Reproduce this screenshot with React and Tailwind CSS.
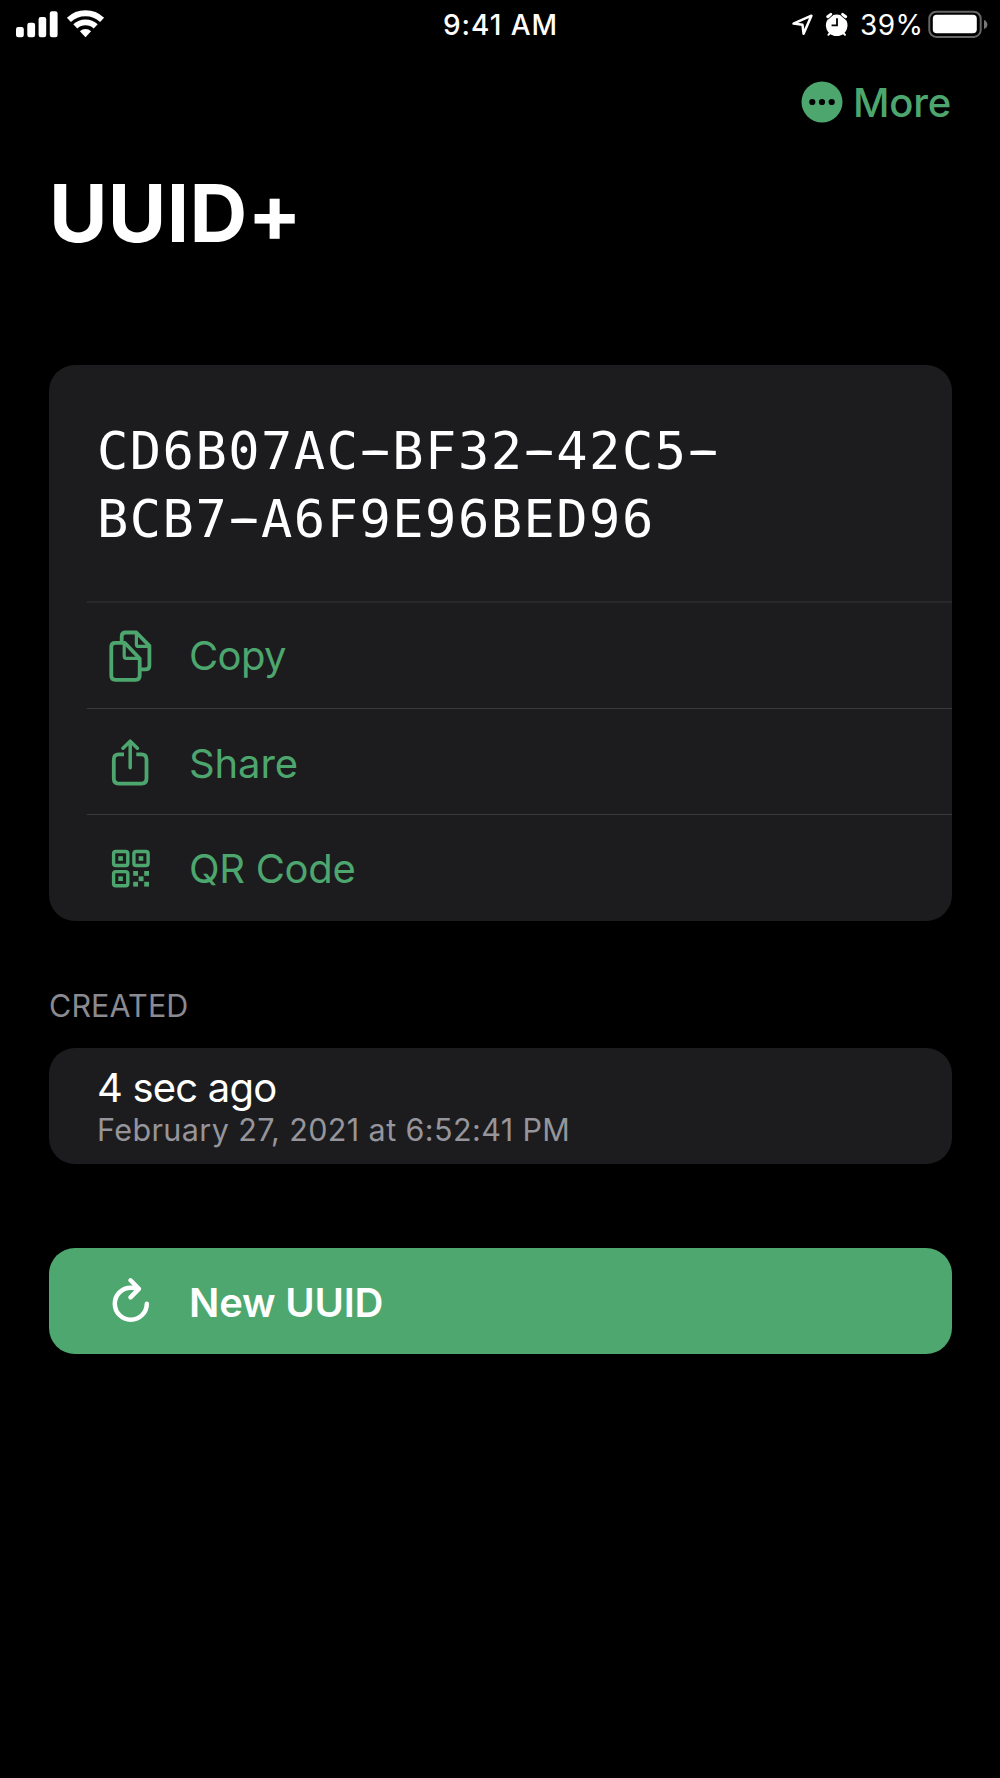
import React from "react";

function StatusBar() {
  return (
    <div className="flex h-[50px] w-full shrink-0 justify-between text-[28px] leading-[51px] text-white">
      <div className="flex w-[400px]">
        <svg width="110" height="50" viewBox="0 0 110 50" fill="#fff">
          <rect x="16" y="27" width="7.8" height="10.3" rx="2.2" />
          <rect x="27.3" y="22.7" width="7.8" height="14.6" rx="2.2" />
          <rect x="38.6" y="17" width="7.6" height="20.3" rx="2.2" />
          <rect x="49.8" y="11.2" width="7.8" height="26.1" rx="2.2" />
          <path d="M85.5 37.3 L79.9 31.3 A8.2 8.2 0 0 1 91.1 31.3 Z" />
          <path d="M75.3 26.4 A14.7 14.7 0 0 1 95.7 26.4" fill="none" stroke="#fff" strokeWidth="5.8" />
          <path d="M68.9 19.9 A24 24 0 0 1 102.1 19.9" fill="none" stroke="#fff" strokeWidth="5.8" />
        </svg>
      </div>
      <div className="w-[200px] pl-[1px] text-center font-medium tracking-[0.95px]">9:41 AM</div>
      <div className="flex w-[400px] justify-end">
        <svg width="70" height="50" viewBox="785 0 70 50">
          <path d="M793.5 23.6 L811.4 15.7 L803.6 33.8 L802.5 24.8 Z" fill="none" stroke="#fff" strokeWidth="2.5" strokeLinejoin="round" />
          <circle cx="836.7" cy="25.3" r="10.8" fill="#fff" />
          <g stroke="#fff" strokeWidth="3" strokeLinecap="round">
            <path d="M827.7 16.7 L830.8 14.4" />
            <path d="M845.7 16.7 L842.6 14.4" />
            <path d="M830 33 L828.4 34.8 M843.4 33 L845 34.8" strokeWidth="2" />
          </g>
          <path d="M827.6 19.6 L833 14.9 M845.8 19.6 L840.4 14.9" stroke="#000" strokeWidth="0.9" />
          <path d="M837 18.3 V25.4 H831.6" fill="none" stroke="#000" strokeWidth="1.8" />
        </svg>
        <span className="w-[72px] pl-[5px] whitespace-nowrap tracking-[0.4px]">39%</span>
        <svg width="73" height="50" viewBox="927 0 73 50">
          <rect x="929.3" y="11.7" width="51.4" height="25.2" rx="7" fill="none" stroke="#666" strokeWidth="2" />
          <rect x="932.8" y="14.8" width="44" height="18.4" rx="4" fill="#fff" />
          <path d="M984 20 Q987.4 21.5 987.4 24.5 Q987.4 27.5 984 29 Z" fill="#777" />
        </svg>
      </div>
    </div>
  );
}

function CopyIcon() {
  return (
    <svg width="48" height="56" viewBox="0 0 48 56" fill="none" stroke="currentColor" strokeWidth="3.8" strokeLinejoin="round">
      <path d="M18.7 14.8 H9.3 Q5.3 14.8 5.3 18.8 V47.8 Q5.3 51.8 9.3 51.8 H29.7 Q33.7 51.8 33.7 47.8 V30.5 Z" />
      <path d="M18.2 15 V28.3 Q18.2 30.3 20.2 30.3 H33.5" strokeWidth="3.2" />
      <path d="M15.7 14 V8.5 Q15.7 4.5 19.7 4.5 H30.4 L43.4 17.8 V37.4 Q43.4 41.4 39.4 41.4 H34.5" />
      <path d="M30.4 5 V16.4 Q30.4 18.4 32.4 18.4 H43" strokeWidth="3.2" />
    </svg>
  );
}

function ShareIcon() {
  return (
    <svg width="48" height="56" viewBox="0 0 48 56" fill="none" stroke="currentColor" strokeWidth="3.8">
      <path d="M18 20.4 H12.8 Q7.8 20.4 7.8 25.4 V44.6 Q7.8 49.6 12.8 49.6 H35.5 Q40.5 49.6 40.5 44.6 V25.4 Q40.5 20.4 35.5 20.4 H30.3" />
      <path d="M24.2 7.5 V33.8 M17 14.2 L24.2 7.2 L31.4 14.2" strokeLinecap="round" strokeLinejoin="round" strokeWidth="3.5" />
    </svg>
  );
}

function QrIcon() {
  return (
    <svg width="48" height="56" viewBox="0 0 48 56" fill="currentColor">
      <g fill="none" stroke="currentColor" strokeWidth="3.4">
        <rect x="7.6" y="11.5" width="14.2" height="14" rx="2.2" />
        <rect x="27.9" y="11.5" width="14.2" height="14" rx="2.2" />
        <rect x="7.6" y="31.6" width="14.2" height="14.2" rx="2.2" />
      </g>
      <rect x="12.3" y="16.2" width="4.6" height="4.6" />
      <rect x="32.7" y="16.2" width="4.6" height="4.6" />
      <rect x="12.3" y="36.4" width="4.6" height="4.6" />
      <rect x="27.2" y="31" width="4.8" height="4.8" />
      <rect x="38.2" y="31" width="4.8" height="4.8" />
      <rect x="32.7" y="36.4" width="4.8" height="4.8" />
      <rect x="27.2" y="41.8" width="4.8" height="4.8" />
      <rect x="38.2" y="41.8" width="4.8" height="4.8" />
    </svg>
  );
}

function ReloadIcon() {
  return (
    <svg width="48" height="56" viewBox="0 0 48 56" fill="none" stroke="currentColor" strokeWidth="4.5" strokeLinecap="round" strokeLinejoin="round">
      <path d="M40.8 30.7 A16 16 0 1 1 24.8 14.7 Q28.5 14.7 31.5 15.6" />
      <path d="M24.5 7.3 L32.9 15.9 L24.5 24.4" />
    </svg>
  );
}

// The hyphen is drawn by stacked shadows so that it fills its whole cell.
const wideHyphen =
  "text-transparent [text-shadow:-6px_-2px_#fff,-3px_-2px_#fff,0px_-2px_#fff,3px_-2px_#fff,6px_-2px_#fff]";

function UuidLine({ groups }) {
  return (
    <span className="block whitespace-nowrap">
      {groups.map((g, i) => (
        <span key={i} className={g === "-" ? wideHyphen : ""}>{g}</span>
      ))}
    </span>
  );
}

export default function App() {
  return (
    <div className="flex h-[1778px] w-[1000px] flex-col overflow-hidden bg-black font-['Inter',sans-serif] text-white">
      <StatusBar />
      <header className="flex h-[103px] items-center justify-end pr-[49px] text-[#4ca66e]">
        <svg width="42" height="42" viewBox="0 0 42 42">
          <circle cx="21" cy="21" r="20.5" fill="currentColor" />
          <circle cx="11.3" cy="21" r="3.1" fill="#000" />
          <circle cx="21" cy="21" r="3.1" fill="#000" />
          <circle cx="30.7" cy="21" r="3.1" fill="#000" />
        </svg>
        <span className="ml-[10px] pt-[2px] text-[40px] leading-[50px] font-medium tracking-[-0.2px]">More</span>
      </header>
      <h1 className="mt-[2px] ml-[49px] h-[115px] w-fit text-[80px] leading-[115px] font-bold tracking-[0.3px] [font-feature-settings:'calt'_0]">UUID+</h1>

      <main className="mt-[95px] ml-[48.5px] w-[903px]">
        <section className="overflow-hidden rounded-[26px] bg-[#1c1c1e]">
          <div className="h-[236px] pt-[53px]">
            <p className="ml-[48.5px] w-fit font-['DejaVu_Sans_Mono',monospace] text-[52px] leading-[67.7px] tracking-[1.5px]">
              <UuidLine groups={["CD6B07AC", "-", "BF32", "-", "42C5", "-"]} />
              <UuidLine groups={["BCB7", "-", "A6F9E96BED96"]} />
            </p>
          </div>
          <div className="ml-[38.5px] h-[2px] bg-[#29292b]" />
          <div className="text-[#4ca66e]">
            <div className="ml-[38.5px] flex h-[106px] items-center border-b border-[#3a3a3d] pl-[19px]">
              <CopyIcon />
              <span className="ml-[35px] text-[40px] leading-[50px] tracking-[-0.6px]">Copy</span>
            </div>
            <div className="ml-[38.5px] flex h-[106px] items-center border-b border-[#3a3a3d] pl-[19px]">
              <ShareIcon />
              <span className="ml-[35px] pt-[4px] text-[40px] leading-[50px] tracking-[-0.1px]">Share</span>
            </div>
            <div className="ml-[38.5px] flex h-[106px] items-center pl-[19px]">
              <QrIcon />
              <span className="ml-[35px] pt-[2px] text-[40px] leading-[50px] tracking-[-0.3px]">QR Code</span>
            </div>
          </div>
        </section>

        <h2 className="mt-[64px] h-[40px] w-fit pl-[0.5px] text-[30.5px] leading-[41px] tracking-[0.1px] text-[#8a8a90]">CREATED</h2>
        <section className="mt-[23px] h-[115.5px] rounded-[26px] bg-[#1c1c1e] pt-[15px] pl-[48.5px]">
          <p className="h-[50px] w-fit text-[40px] leading-[50px] tracking-[-0.8px]">4 sec ago</p>
          <p className="h-[34px] w-fit text-[30.5px] leading-[34px] tracking-[0.4px] text-[#95959b]">February 27, 2021 at 6:52:41 PM</p>
        </section>

        <button className="mt-[84.5px] flex h-[106px] w-full items-center rounded-[26px] bg-[#4da76f] pl-[57.5px] text-white">
          <ReloadIcon />
          <span className="ml-[35px] pt-[4px] text-[40px] leading-[50px] font-semibold tracking-[-0.2px]">New UUID</span>
        </button>
      </main>
    </div>
  );
}
